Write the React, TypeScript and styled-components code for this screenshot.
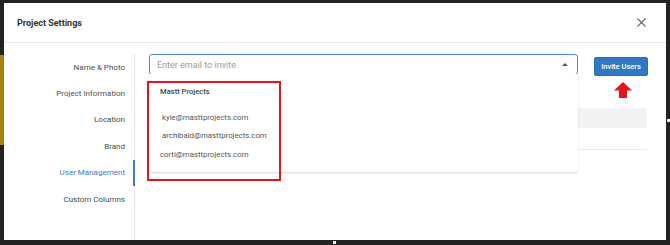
import React from "react";
import styled, { createGlobalStyle } from "styled-components";

const GlobalStyle = createGlobalStyle`
  html, body {
    margin: 0;
    padding: 0;
    background: #232323;
  }
  body {
    font-family: Roboto, "Liberation Sans", sans-serif;
  }
`;

const Frame = styled.div`
  position: relative;
  width: 670px;
  height: 245px;
  box-sizing: border-box;
  padding: 3px 4px 5px 4px;
  background: linear-gradient(#a5810f, #a5810f) left 55px / 4px 90px no-repeat, #232323;
`;

// little selection handles from the screen capture
const Handle = styled.span<{ $bottom?: boolean }>`
  position: absolute;
  width: 3px;
  height: 3px;
  background: #eee;
  ${({ $bottom }) => ($bottom ? "left: 333px; bottom: 1px;" : "right: 0; top: 119px;")}
`;

const Modal = styled.div`
  position: relative;
  display: flex;
  flex-direction: column;
  height: 100%;
  background: #fff;
  overflow: hidden;
`;

const Header = styled.div`
  display: flex;
  align-items: center;
  justify-content: space-between;
  height: 39px;
  padding: 0 20px 0 13px;
  border-bottom: 1px solid #ececec;
`;

const Title = styled.h1`
  margin: 0;
  font-size: 9px;
  font-weight: 700;
  color: #333;
`;

const Close = styled.button`
  display: flex;
  padding: 0;
  border: 0;
  background: none;
`;

const Body = styled.div`
  flex: 1;
  display: flex;
`;

const Sidebar = styled.nav`
  width: 131px;
  margin-top: 11px;
  box-sizing: border-box;
  border-right: 1px solid #e6e6e6;
  display: flex;
  flex-direction: column;
`;

const NavItem = styled.div<{ $active?: boolean }>`
  height: 26.4px;
  display: flex;
  align-items: center;
  justify-content: flex-end;
  padding-right: 9px;
  font-size: 8px;
  color: ${({ $active }) => ($active ? "#3b7bc9" : "#4d4d4d")};
  ${({ $active }) => ($active ? "border-right: 2px solid #3b7bc9; margin-right: -1px; padding-right: 8px;" : "")}
`;

const Content = styled.div`
  position: relative;
  flex: 1;
  padding: 11px 18px 0 14px;
`;

const InviteRow = styled.div`
  display: flex;
  align-items: flex-start;
  gap: 16px;
`;

const InputBox = styled.div`
  position: relative;
  flex: 1;
  height: 21px;
  box-sizing: border-box;
  display: flex;
  align-items: center;
  justify-content: space-between;
  padding: 0 9px 0 7px;
  border: 1px solid #4f88cf;
  border-radius: 3px;
`;

const Placeholder = styled.span`
  font-size: 9px;
  color: #9c9c9c;
`;

const Caret = styled.span`
  width: 0;
  height: 0;
  border-left: 3px solid transparent;
  border-right: 3px solid transparent;
  border-bottom: 3px solid #555;
`;

const Menu = styled.div`
  position: absolute;
  top: 100%;
  left: -1px;
  right: -1px;
  height: 98px;
  box-sizing: border-box;
  background: #fff;
  border-radius: 0 0 3px 3px;
  box-shadow: 0 1px 2px rgba(0, 0, 0, 0.18);
  z-index: 2;
`;

const GroupLabel = styled.div`
  margin-top: 11px;
  height: 14px;
  line-height: 14px;
  padding-left: 11px;
  font-size: 7.6px;
  font-weight: 500;
  color: #444;
`;

const OptionList = styled.div`
  padding-top: 9px;
`;

const Option = styled.div<{ $shift?: number }>`
  height: 18.5px;
  display: flex;
  align-items: center;
  padding-left: ${({ $shift = 13 }) => $shift}px;
  font-size: 7.8px;
  color: #555;
`;

const InviteButton = styled.button`
  width: 54px;
  height: 19px;
  margin-top: 3px;
  padding: 0;
  border: 1px solid #2b6fb8;
  border-radius: 2px;
  background: #2f78c4;
  color: #fff;
  font-family: inherit;
  font-size: 7.5px;
  font-weight: 500;
`;

const Table = styled.div`
  margin-top: 32px;
  margin-right: 1px;
`;

const TableHead = styled.div`
  height: 20px;
  background: #f3f3f3;
`;

const TableRow = styled.div`
  height: 21px;
  border-bottom: 1px solid #ececec;
`;

const Callout = styled.div`
  position: absolute;
  left: 12px;
  top: 38px;
  width: 134px;
  height: 100px;
  box-sizing: border-box;
  border: 2px solid #e5141c;
  z-index: 3;
`;

const Arrow = styled.svg`
  position: absolute;
  left: 479px;
  top: 39px;
`;

const navItems = [
  "Name & Photo",
  "Project Information",
  "Location",
  "Brand",
  "User Management",
  "Custom Columns",
];

const emails = [
  { email: "kyle@masttprojects.com", shift: 13 },
  { email: "archibald@masttprojects.com", shift: 13 },
  { email: "corti@masttprojects.com", shift: 11 },
];

export default function App() {
  return (
    <>
      <GlobalStyle />
      <Frame>
        <Modal>
          <Header>
            <Title>Project Settings</Title>
            <Close aria-label="Close">
              <svg width="9" height="9" viewBox="0 0 9 9">
                <path d="M0.5 0.5L8.5 8.5M8.5 0.5L0.5 8.5" stroke="#666" strokeWidth="1.1" />
              </svg>
            </Close>
          </Header>
          <Body>
            <Sidebar>
              {navItems.map((label) => (
                <NavItem key={label} $active={label === "User Management"}>
                  {label}
                </NavItem>
              ))}
            </Sidebar>
            <Content>
              <InviteRow>
                <InputBox>
                  <Placeholder>Enter email to invite</Placeholder>
                  <Caret />
                  <Menu>
                    <GroupLabel>Mastt Projects</GroupLabel>
                    <OptionList>
                      {emails.map((e) => (
                        <Option key={e.email} $shift={e.shift}>
                          {e.email}
                        </Option>
                      ))}
                    </OptionList>
                  </Menu>
                </InputBox>
                <InviteButton>Invite Users</InviteButton>
              </InviteRow>
              <Table>
                <TableHead />
                <TableRow />
              </Table>
              <Callout />
              <Arrow width="18" height="16" viewBox="0 0 18 16">
                <path d="M9 0L18 8.5H13V16H5V8.5H0Z" fill="#e5141c" />
              </Arrow>
            </Content>
          </Body>
        </Modal>
        <Handle />
        <Handle $bottom />
      </Frame>
    </>
  );
}
